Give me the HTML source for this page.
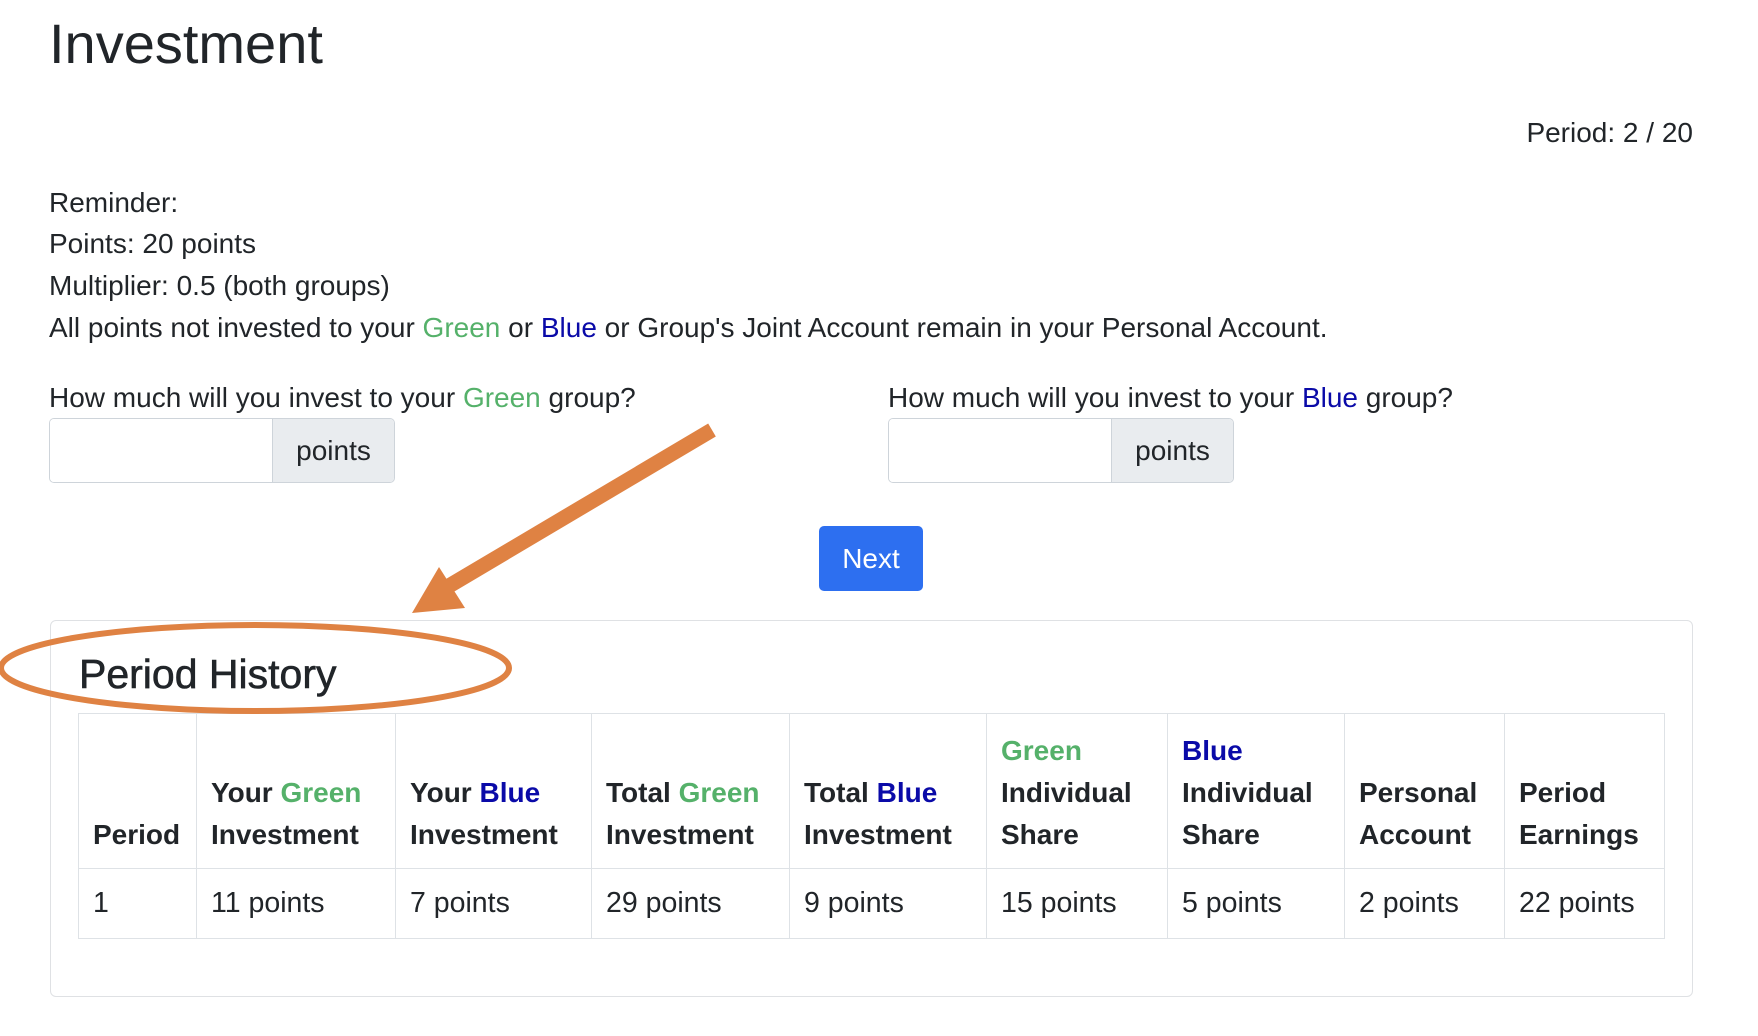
<!DOCTYPE html>
<html><head><meta charset="utf-8">
<style>
*{box-sizing:border-box;margin:0;padding:0}
body{width:1758px;height:1036px;overflow:hidden;background:#fff;font-family:"Liberation Sans",Arial,sans-serif;color:#212529;position:relative}
.abs{position:absolute;white-space:nowrap}
.g{color:#55b16a}.b{color:#0a0aa8}
h1{position:absolute;left:49px;top:13px;font-size:56px;font-weight:500;line-height:62px}
.t{font-size:28px;line-height:30px}
.ig{position:absolute;height:65px;border:1px solid #ced4da;border-radius:5px;display:flex;overflow:hidden}
.ig .in{flex:1;background:#fff;border-right:1px solid #ced4da}
.ig .ad{width:121px;background:#e9ecef;font-size:28px;display:flex;align-items:center;justify-content:center}
.btn{position:absolute;left:819px;top:526px;width:104px;height:65px;background:#2d6ff0;border-radius:5px;color:#fff;font-size:28px;display:flex;align-items:center;justify-content:center}
.card{position:absolute;left:50px;top:620px;width:1643px;height:377px;border:1px solid #dfe1e4;border-radius:6px}
table{position:absolute;left:78px;top:713px;border-collapse:collapse;font-size:28.5px;table-layout:fixed}
td,th{border:1px solid #dee2e6;padding:0 14px;text-align:left;vertical-align:bottom;white-space:nowrap}
th{height:155px;font-weight:bold;line-height:42px;padding-bottom:12px;font-size:28px}
td{height:70px;vertical-align:middle}
</style></head><body>
<h1>Investment</h1>
<div class="abs t" style="right:65px;top:118px">Period: 2 / 20</div>
<div class="abs t" style="left:49px;top:188px">Reminder:</div>
<div class="abs t" style="left:49px;top:229px">Points: 20 points</div>
<div class="abs t" style="left:49px;top:271px">Multiplier: 0.5 (both groups)</div>
<div class="abs t" style="left:49px;top:313px">All points not invested to your <span class="g">Green</span> or <span class="b">Blue</span> or Group's Joint Account remain in your Personal Account.</div>
<div class="abs t" style="left:49px;top:383px">How much will you invest to your <span class="g">Green</span> group?</div>
<div class="abs t" style="left:888px;top:383px">How much will you invest to your <span class="b">Blue</span> group?</div>
<div class="ig" style="left:49px;top:418px;width:346px"><div class="in"></div><div class="ad">points</div></div>
<div class="ig" style="left:888px;top:418px;width:346px"><div class="in"></div><div class="ad">points</div></div>
<div class="btn">Next</div>
<div class="card"></div>
<div class="abs" style="left:79px;top:651px;font-size:41px;font-weight:500;-webkit-text-stroke:0.6px #212529">Period History</div>
<table>
<colgroup><col style="width:118px"><col style="width:199px"><col style="width:196px"><col style="width:198px"><col style="width:197px"><col style="width:181px"><col style="width:177px"><col style="width:160px"><col style="width:160px"></colgroup>
<tr><th>Period</th><th>Your <span class="g">Green</span><br>Investment</th><th>Your <span class="b">Blue</span><br>Investment</th><th>Total <span class="g">Green</span><br>Investment</th><th>Total <span class="b">Blue</span><br>Investment</th><th><span class="g">Green</span><br>Individual<br>Share</th><th><span class="b">Blue</span><br>Individual<br>Share</th><th>Personal<br>Account</th><th>Period<br>Earnings</th></tr>
<tr><td>1</td><td>11 points</td><td>7 points</td><td>29 points</td><td>9 points</td><td>15 points</td><td>5 points</td><td>2 points</td><td>22 points</td></tr>
</table>
<svg class="abs" style="left:0;top:0" width="1758" height="1036">
<ellipse cx="255" cy="668" rx="254" ry="43" fill="none" stroke="#df8243" stroke-width="6"/>
<line x1="712" y1="430" x2="432" y2="596" stroke="#df8243" stroke-width="15"/>
<polygon points="412,613 439,567 465,608" fill="#df8243"/>
</svg>
</body></html>
